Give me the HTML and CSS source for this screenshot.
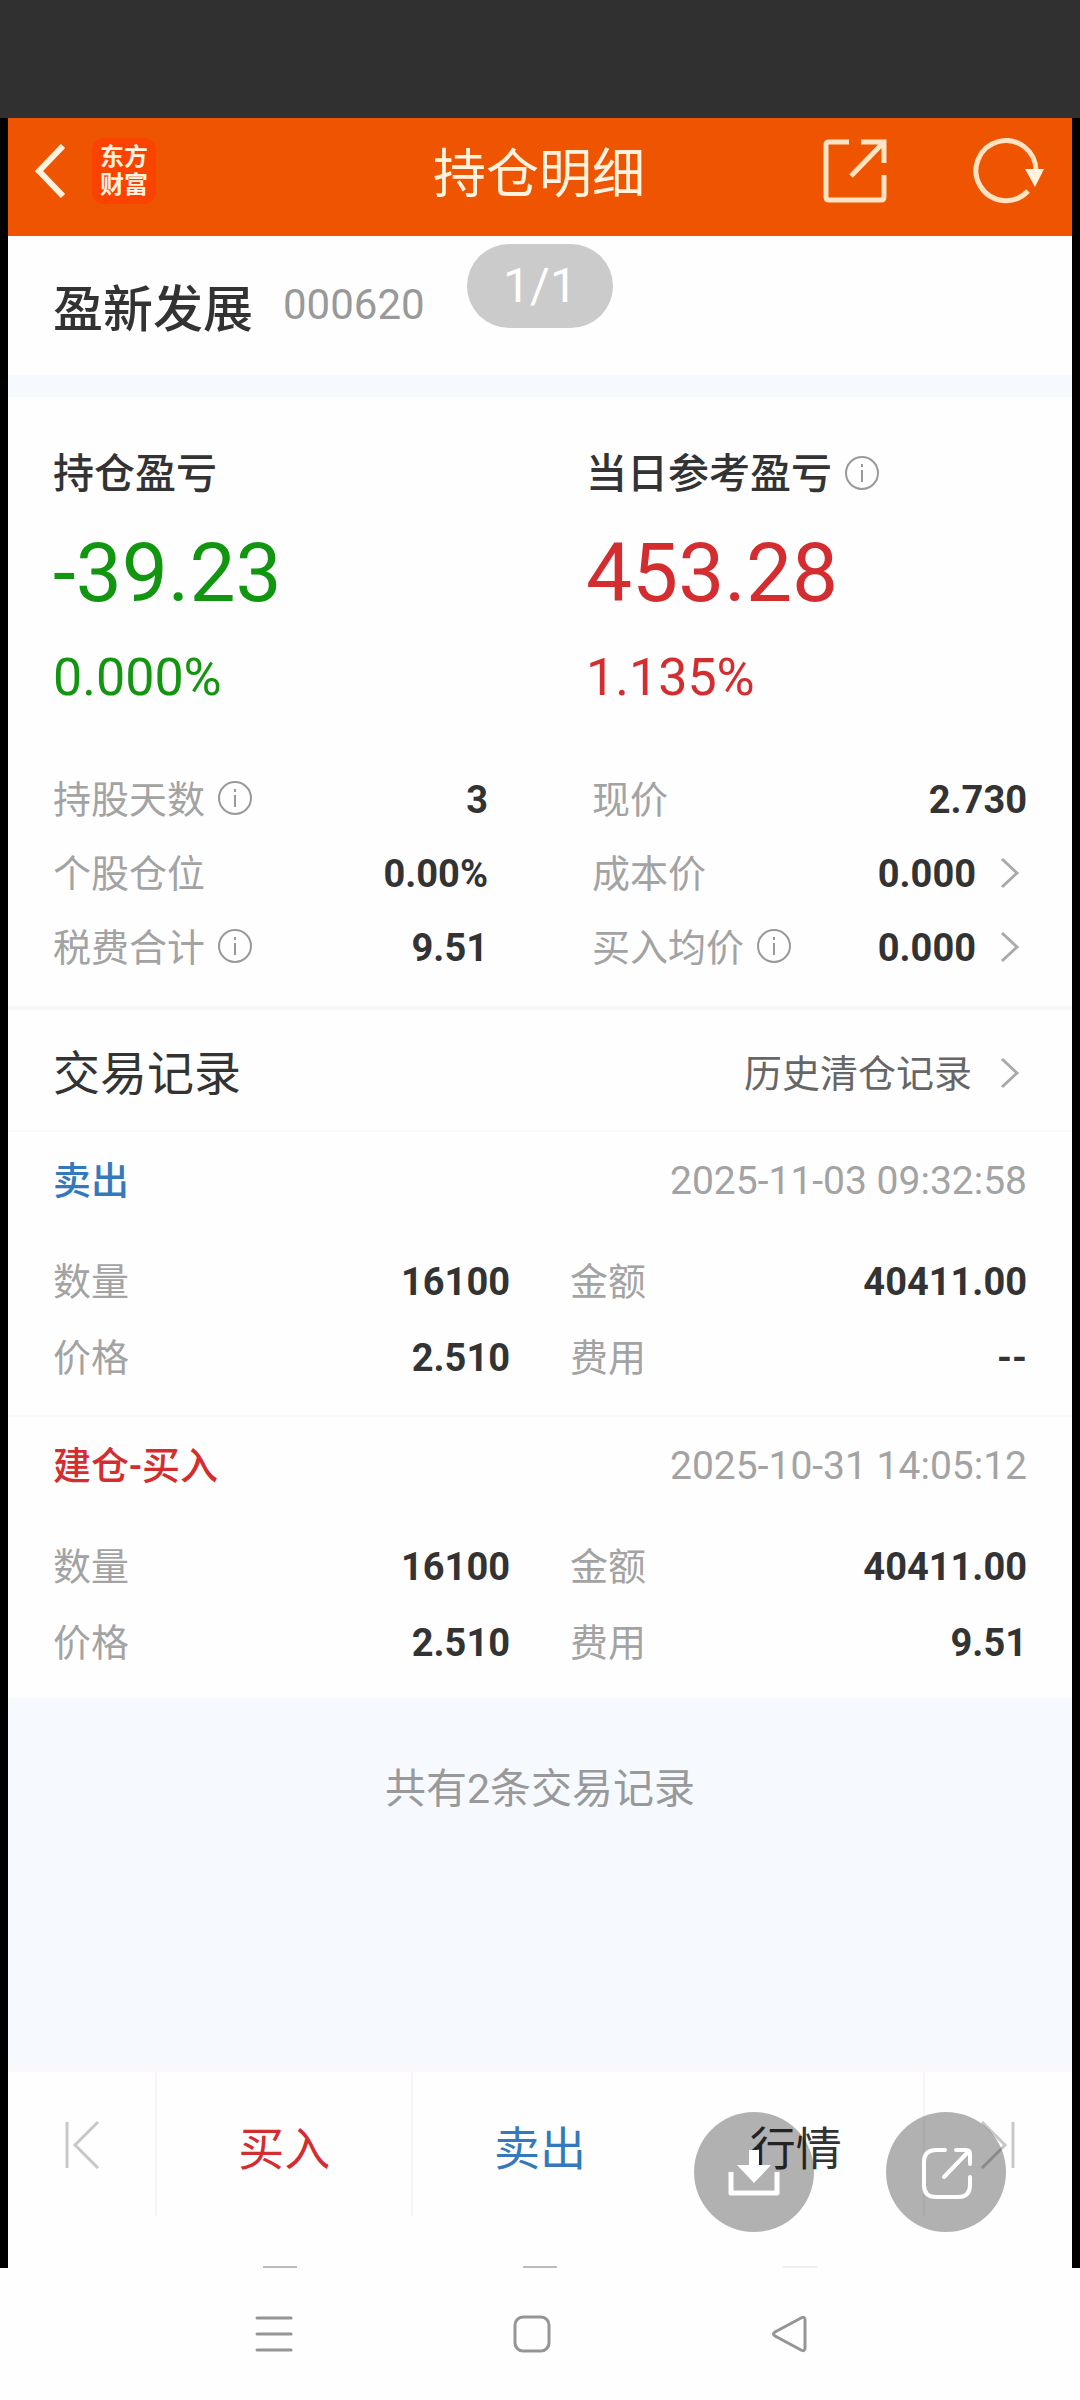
FILE: index.html
```html
<!DOCTYPE html>
<html lang="zh-CN">
<head>
    <meta charset="UTF-8">
    <meta name="viewport" content="width=device-width, initial-scale=1.0">
    <title>持仓明细</title>
    <link rel="stylesheet" href="styles.css">
</head>
<body>
    <div class="status-bar"></div>

    <div class="app">
        <header class="header">
            <div class="header-side">
                <button class="icon-btn" type="button" aria-label="返回">
                    <svg width="36" height="60" viewBox="0 0 36 60"><path d="M31 5 L7 30 L31 55" fill="none" stroke="#fff3e0" stroke-width="6"/></svg>
                </button>
                <div class="logo">东方<br>财富</div>
            </div>
            <h1>持仓明细</h1>
            <div class="header-side header-right">
                <button class="icon-btn" type="button" aria-label="分享">
                    <svg width="66" height="66" viewBox="0 0 66 66" fill="none" stroke="#ffe3c2" stroke-width="5"><path d="M27 4 H7 Q4 4 4 7 V59 Q4 62 7 62 H59 Q62 62 62 59 V37"/><path d="M39 4 H62 V25 M62 4 L29 38"/></svg>
                </button>
                <button class="icon-btn" type="button" aria-label="刷新">
                    <svg width="74" height="66" viewBox="0 0 74 66"><path d="M64 33 A30 30 0 1 0 56 53" fill="none" stroke="#ffe3c2" stroke-width="5"/><path d="M53 31 H72 L63 49 Z" fill="#fff3e0"/></svg>
                </button>
            </div>
        </header>
        <div class="pager">1/1</div>

        <main>
            <section class="stock">
                <h2>盈新发展</h2>
                <span class="code">000620</span>
            </section>

            <section class="position">
                <div class="summary">
                    <div>
                        <div class="summary-label">持仓盈亏</div>
                        <div class="amount green">-39.23</div>
                        <div class="percent green">0.000%</div>
                    </div>
                    <div>
                        <div class="summary-label">当日参考盈亏
                            <svg class="info" viewBox="0 0 36 36"><circle cx="18" cy="17" r="16"/><path d="M18 8 V11 M18 14 V26"/></svg>
                        </div>
                        <div class="amount red">453.28</div>
                        <div class="percent red">1.135%</div>
                    </div>
                </div>

                <dl class="details">
                    <div class="row">
                        <dt>持股天数 <svg class="info" viewBox="0 0 36 36"><circle cx="18" cy="16" r="16"/><path d="M18 7 V10 M18 13 V25"/></svg></dt>
                        <dd>3</dd>
                    </div>
                    <div class="row">
                        <dt>现价</dt>
                        <dd>2.730</dd>
                    </div>
                    <div class="row">
                        <dt>个股仓位</dt>
                        <dd>0.00%</dd>
                    </div>
                    <div class="row">
                        <dt>成本价</dt>
                        <dd>0.000 <svg class="arrow" viewBox="0 0 20 32"><path d="M2 1 L17 15 L2 29"/></svg></dd>
                    </div>
                    <div class="row">
                        <dt>税费合计 <svg class="info" viewBox="0 0 36 36"><circle cx="18" cy="16" r="16"/><path d="M18 7 V10 M18 13 V25"/></svg></dt>
                        <dd>9.51</dd>
                    </div>
                    <div class="row">
                        <dt>买入均价 <svg class="info" viewBox="0 0 36 36"><circle cx="18" cy="16" r="16"/><path d="M18 7 V10 M18 13 V25"/></svg></dt>
                        <dd>0.000 <svg class="arrow" viewBox="0 0 20 32"><path d="M2 1 L17 15 L2 29"/></svg></dd>
                    </div>
                </dl>
            </section>

            <section class="records">
                <div class="records-head">
                    <h3>交易记录</h3>
                    <a href="#history">历史清仓记录 <svg class="arrow" viewBox="0 0 20 32"><path d="M2 1 L17 15 L2 29"/></svg></a>
                </div>

                <article class="record">
                    <div class="record-head">
                        <h4 class="blue">卖出</h4>
                        <time>2025-11-03 09:32:58</time>
                    </div>
                    <dl class="record-grid">
                        <div class="row"><dt>数量</dt><dd>16100</dd></div>
                        <div class="row"><dt>金额</dt><dd>40411.00</dd></div>
                        <div class="row"><dt>价格</dt><dd>2.510</dd></div>
                        <div class="row"><dt>费用</dt><dd>--</dd></div>
                    </dl>
                </article>

                <article class="record">
                    <div class="record-head">
                        <h4 class="red">建仓-买入</h4>
                        <time>2025-10-31 14:05:12</time>
                    </div>
                    <dl class="record-grid">
                        <div class="row"><dt>数量</dt><dd>16100</dd></div>
                        <div class="row"><dt>金额</dt><dd>40411.00</dd></div>
                        <div class="row"><dt>价格</dt><dd>2.510</dd></div>
                        <div class="row"><dt>费用</dt><dd>9.51</dd></div>
                    </dl>
                </article>
            </section>

            <p class="total">共有2条交易记录</p>
        </main>

        <footer class="footer">
            <nav class="tabs">
                <button class="tab tab-step" type="button" aria-label="上一个">
                    <svg width="36" height="48" viewBox="0 0 36 48"><path d="M3 1 V47 M34 1 L11 24 L34 47"/></svg>
                </button>
                <button class="tab red" type="button">买入</button>
                <button class="tab blue" type="button">卖出</button>
                <button class="tab" type="button">行情</button>
                <button class="tab tab-step" type="button" aria-label="下一个">
                    <svg width="36" height="48" viewBox="0 0 36 48"><path d="M33 1 V47 M2 1 L25 24 L2 47"/></svg>
                </button>
            </nav>
            <!-- tops of the phone keys cut off by the edge of the page -->
            <div class="cut-keys"><span></span><span></span><span class="faint"></span></div>

            <div class="floating">
                <button class="float-btn" type="button" aria-label="下载">
                    <svg width="120" height="120" viewBox="0 0 120 120"><path d="M37 60 V81 H83 V60" fill="none" stroke="#fff" stroke-width="5" stroke-linejoin="round"/><path d="M55 38 H65 V53 H77 L60 71 L43 53 H55 Z" fill="#fff"/></svg>
                </button>
                <button class="float-btn" type="button" aria-label="打开">
                    <svg width="120" height="120" viewBox="0 0 120 120" fill="none" stroke="#fff" stroke-width="4" stroke-linecap="round" stroke-linejoin="round"><path d="M59 38 H50 Q38 38 38 50 V73 Q38 85 50 85 H72 Q84 85 84 73 V65"/><path d="M70 38 H80 Q84 38 84 42 V52 M82 40 L58 65"/></svg>
                </button>
            </div>
        </footer>
    </div>

    <nav class="system-nav">
        <button class="icon-btn" type="button" aria-label="菜单">
            <svg width="40" height="40" viewBox="0 0 40 40"><path d="M3 4 H37 M3 20 H37 M3 36 H37"/></svg>
        </button>
        <button class="icon-btn" type="button" aria-label="主页">
            <svg width="40" height="40" viewBox="0 0 40 40"><rect x="3" y="3" width="34" height="34" rx="8"/></svg>
        </button>
        <button class="icon-btn" type="button" aria-label="后退">
            <svg width="40" height="40" viewBox="0 0 40 40"><path d="M31 4 Q35 2 35 6 V34 Q35 38 31 36 L5 22 Q2 20 5 18 Z"/></svg>
        </button>
    </nav>
</body>
</html>
```
FILE: styles.css
```css
* {
    box-sizing: border-box;
}
body {
    margin: 0;
    min-height: 100vh;
    display: flex;
    flex-direction: column;
    background-color: #fefefe;
    color: #333;
    font-family: Roboto, "Noto Sans CJK SC", sans-serif;
    font-size: 38px;
}
h1, h2, h3, h4, p, dl, dt, dd {
    margin: 0;
    font-weight: 400;
}
button {
    padding: 0;
    border: none;
    background: none;
    font-family: inherit;
    color: inherit;
    cursor: pointer;
}
svg {
    display: block;
}
.status-bar {
    height: 118px;
    background-color: #303030;
}
.app {
    flex: 1;
    display: flex;
    flex-direction: column;
    position: relative;
    border: solid #000;
    border-width: 0 8px;
}
.header {
    display: flex;
    align-items: center;
    height: 118px;
    padding: 0 26px 12px 24px;
    background-color: #ef5400;
    color: #fff3e0;
}
.header h1 {
    padding-top: 8px;
    font-size: 53px;
    line-height: 98px;
}
.header-side {
    flex: 1;
    display: flex;
    align-items: center;
    gap: 24px;
}
.header-right {
    justify-content: flex-end;
    gap: 84px;
}
.logo {
    padding: 5px 8px;
    border-radius: 12px;
    background-color: #fa4300;
    font-size: 24px;
    font-weight: 700;
    line-height: 28px;
}
.pager {
    position: absolute;
    top: 126px;
    left: 50%;
    width: 146px;
    margin-left: -73px;
    border-radius: 42px;
    background-color: rgba(0, 0, 0, 0.2);
    color: #fff;
    font-size: 48px;
    line-height: 84px;
    text-align: center;
}
main {
    flex: 1;
    background-color: #f6f9fe;
}
.stock {
    display: flex;
    align-items: center;
    gap: 30px;
    height: 139px;
    padding: 0 45px 2px;
    background-color: #fefefe;
}
.stock h2 {
    font-size: 50px;
    font-weight: 500;
}
.code {
    color: #999;
    font-size: 42px;
}
.position {
    margin-top: 22px;
    padding: 47px 45px 21px;
    border-bottom: 4px solid #f7f7f8;
    background-color: #fefefe;
}
.summary {
    display: grid;
    grid-template-columns: 1fr 1fr;
    column-gap: 92px;
    margin-bottom: 49px;
}
.summary-label {
    display: flex;
    align-items: center;
    gap: 12px;
    font-size: 41px;
    font-weight: 500;
    line-height: 60px;
}
.amount {
    font-size: 82px;
    line-height: 138px;
}
.percent {
    font-size: 52px;
    line-height: 72px;
}
.green {
    color: #12960f;
}
.red {
    color: #d42d30;
}
.blue {
    color: #3579bd;
}
.info {
    width: 36px;
    height: 36px;
    overflow: visible;
    fill: none;
    stroke: #999;
    stroke-width: 2;
}
.arrow {
    width: 20px;
    height: 32px;
    margin: 0 7px 0 24px;
    fill: none;
    stroke: #aaa;
    stroke-width: 3;
}
.details {
    display: grid;
    grid-template-columns: 1fr 1fr;
    column-gap: 104px;
    line-height: 74px;
}
.row {
    display: flex;
    justify-content: space-between;
}
.row dt {
    display: flex;
    align-items: center;
    gap: 12px;
    color: #a3a3a3;
}
.row dd {
    display: flex;
    align-items: center;
    font-weight: 700;
}
.records {
    background-color: #fefefe;
}
.records-head {
    display: flex;
    justify-content: space-between;
    align-items: center;
    padding: 8px 45px 0;
    border-bottom: 2px solid #fcf9fb;
    line-height: 112px;
}
.records-head h3 {
    font-size: 47px;
}
.records-head a {
    display: flex;
    align-items: center;
    color: #666;
    text-decoration: none;
}
.records-head .arrow {
    margin-left: 28px;
}
.record {
    padding: 0 45px 19px;
    border-bottom: 2px solid #fcf9fb;
}
.record:last-child {
    padding-bottom: 16px;
}
.record-head {
    display: flex;
    justify-content: space-between;
    line-height: 98px;
}
.record-head h4 {
    font-weight: 500;
}
.record-head time {
    color: #a3a3a3;
    font-size: 39px;
}
.record-grid {
    display: grid;
    grid-template-columns: 1fr 1fr;
    column-gap: 60px;
    padding-top: 14px;
    line-height: 76px;
}
.total {
    padding: 58px 0;
    color: #999;
    font-size: 41px;
    line-height: 64px;
    text-align: center;
}
.footer {
    position: relative;
    border-top: 8px solid #fbf8fb;
    background-color: #fefefe;
}
.tabs {
    display: flex;
    height: 144px;
}
.tab {
    flex: 255;
    padding-top: 2px;
    font-size: 46px;
    border-right: 2px solid #f6f4f6;
}
.tab-step {
    flex: 148;
    display: flex;
    align-items: center;
    justify-content: center;
}
.tab:nth-child(3) {
    border-color: transparent;
}
.tab:last-child {
    border: none;
}
.tab svg {
    fill: none;
    stroke: #c8c8c8;
    stroke-width: 3;
}
.cut-keys {
    display: flex;
    justify-content: center;
    align-items: flex-end;
    gap: 226px;
    height: 52px;
}
.cut-keys span {
    width: 34px;
    height: 2px;
    background-color: #bbb;
}
.cut-keys .faint {
    background-color: #eee;
}
.floating {
    position: absolute;
    top: 40px;
    right: 66px;
    display: flex;
    gap: 72px;
}
.float-btn {
    border-radius: 50%;
    background-color: rgba(0, 0, 0, 0.3);
}
.system-nav {
    display: flex;
    justify-content: center;
    gap: 218px;
    padding: 46px 16px 46px 0;
    background-color: #fefefe;
}
.system-nav svg {
    fill: none;
    stroke: #959595;
    stroke-width: 3;
    stroke-linecap: round;
}
```
